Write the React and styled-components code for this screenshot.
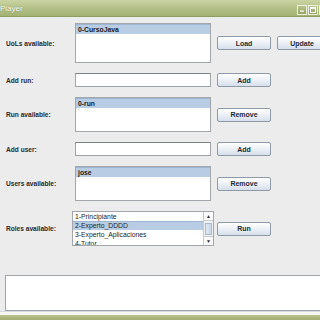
import React from "react";
import styled, { createGlobalStyle } from "styled-components";

const Global = createGlobalStyle`
  html, body { margin: 0; padding: 0; background: #ececec; }
  body { font-family: "Liberation Sans", Arial, sans-serif; }
`;

const Frame = styled.div`
  width: 320px;
  height: 320px;
  overflow: hidden;
  display: flex;
  flex-direction: column;
  background: #ececec;
`;

const TitleBar = styled.div`
  height: 16px;
  flex: none;
  display: flex;
  align-items: center;
  justify-content: space-between;
  background: linear-gradient(#cbd5a3, #b2bf86 55%, #a3b173);
  border-bottom: 1px solid #8f9c62;
`;

const Title = styled.span`
  color: #fff;
  font-size: 8px;
  text-shadow: 0 0 1px #6f7c44;
`;

const WinButtons = styled.div`
  display: flex;
  gap: 1px;
  margin-right: -9px;
  margin-top: 3px;
`;

const WinBtn = styled.div`
  width: 8px;
  height: 8px;
  border: 1px solid #eef2dc;
  background: linear-gradient(#b9c58c, #94a363);
  display: flex;
  align-items: center;
  justify-content: center;
`;

const Body = styled.div`
  padding: 6px 0 0 6px;
  display: grid;
  grid-template-columns: 63px 136px 54px 50px;
  grid-template-rows: 40px 14px 35px 14px 35px 35px;
  row-gap: 10px;
  column-gap: 6px;
  align-items: center;
`;

const Label = styled.div`
  font-size: 6.6px;
  font-weight: bold;
  color: #2a2a2a;
  white-space: nowrap;
`;

const List = styled.div`
  align-self: stretch;
  background: #fff;
  border: 1px solid #a3a7ac;
  box-sizing: border-box;
  display: flex;
  margin: ${(p) => (p.$wide ? "0 -3px 0 -3px" : "0")};
  overflow: hidden;
`;

const Items = styled.div`
  flex: 1;
  display: flex;
  flex-direction: column;
  min-width: 0;
`;

const Item = styled.div`
  height: ${(p) => (p.$compact ? 8 : 9)}px;
  line-height: ${(p) => (p.$compact ? 8 : 9)}px;
  flex: none;
  font-size: 6.8px;
  font-weight: ${(p) => (p.$bold ? "bold" : "normal")};
  padding-left: 2px;
  color: #1d1d1d;
  white-space: nowrap;
  background: ${(p) => (p.$sel ? "#b8cde4" : "transparent")};
  border-top: ${(p) => (p.$sel ? "1px solid #9db6d3" : "1px solid transparent")};
`;

const ScrollBar = styled.div`
  width: 9px;
  flex: none;
  border-left: 1px solid #c5c8cc;
  background: #f2f2f2;
  display: flex;
  flex-direction: column;
  justify-content: space-between;
  align-items: center;
`;

const Arrow = styled.div`
  width: 9px;
  height: 8px;
  display: flex;
  align-items: center;
  justify-content: center;
  font-size: 5px;
  color: #333;
  background: #fafafa;
  border-bottom: ${(p) => (p.$up ? "1px solid #ccc" : "none")};
  border-top: ${(p) => (p.$up ? "none" : "1px solid #ccc")};
`;

const Thumb = styled.div`
  width: 7px;
  height: 12px;
  background: linear-gradient(90deg, #dfe8f3, #c9d7e8);
  border: 1px solid #aab9cc;
  box-sizing: border-box;
`;

const Field = styled.div`
  height: 14px;
  background: #fff;
  border: 1px solid #9fa3a8;
  border-top-color: #7e8287;
  box-sizing: border-box;
`;

const Button = styled.button`
  height: 14px;
  width: ${(p) => (p.$w ? p.$w : 54)}px;
  padding: 0;
  border: 1px solid #8e9aa8;
  border-radius: 2px;
  background: linear-gradient(#ffffff, #eef2f7 45%, #d5dfeb);
  font-family: "Liberation Sans", Arial, sans-serif;
  font-size: 7px;
  font-weight: bold;
  color: #222c38;
  cursor: pointer;
`;

const Log = styled.div`
  margin: 29px 0 0 5px;
  height: 36px;
  flex: none;
  background: #fff;
  border: 1px solid #a0a4a8;
  border-right: none;
  box-sizing: border-box;
`;

const Bottom = styled.div`
  margin-top: auto;
  height: 9px;
  flex: none;
  display: flex;
  flex-direction: column;
`;

const BottomLine = styled.div`
  height: 3px;
  background: #f5f5fa;
  border-top: 1px solid #d6d8e6;
`;

const BottomBar = styled.div`
  flex: 1;
  background: linear-gradient(#b9c38c, #a2ac72);
`;

const Empty = styled.div``;

const roles = ["1-Principiante", "2-Experto_DDDD", "3-Experto_Aplicaciones", "4-Tutor"];

export default function App() {
  return (
    <Frame>
      <Global />
      <TitleBar>
        <Title>Player</Title>
        <WinButtons>
          <WinBtn>
            <svg width="5" height="5" viewBox="0 0 5 5">
              <rect x="0" y="3.5" width="4" height="1.2" fill="#fff" />
            </svg>
          </WinBtn>
          <WinBtn>
            <svg width="6" height="6" viewBox="0 0 6 6">
              <rect x="0.5" y="0.5" width="5" height="5" fill="none" stroke="#fff" />
              <rect x="0.5" y="0.5" width="5" height="1.3" fill="#fff" />
            </svg>
          </WinBtn>
          <WinBtn />
        </WinButtons>
      </TitleBar>

      <Body>
        <Label>UoLs available:</Label>
        <List>
          <Items>
            <Item $sel $bold>0-CursoJava</Item>
          </Items>
        </List>
        <Button>Load</Button>
        <Button $w={50}>Update</Button>

        <Label>Add run:</Label>
        <Field />
        <Button>Add</Button>
        <Empty />

        <Label>Run available:</Label>
        <List>
          <Items>
            <Item $sel $bold>0-run</Item>
          </Items>
        </List>
        <Button>Remove</Button>
        <Empty />

        <Label>Add user:</Label>
        <Field />
        <Button>Add</Button>
        <Empty />

        <Label>Users available:</Label>
        <List>
          <Items>
            <Item $sel $bold>jose</Item>
          </Items>
        </List>
        <Button>Remove</Button>
        <Empty />

        <Label>Roles available:</Label>
        <List $wide>
          <Items>
            {roles.map((r, i) => (
              <Item key={r} $compact $sel={i === 1}>{r}</Item>
            ))}
          </Items>
          <ScrollBar>
            <Arrow $up>▲</Arrow>
            <Thumb />
            <Arrow>▼</Arrow>
          </ScrollBar>
        </List>
        <Button>Run</Button>
        <Empty />
      </Body>

      <Log />
      <Bottom>
        <BottomLine />
        <BottomBar />
      </Bottom>
    </Frame>
  );
}
